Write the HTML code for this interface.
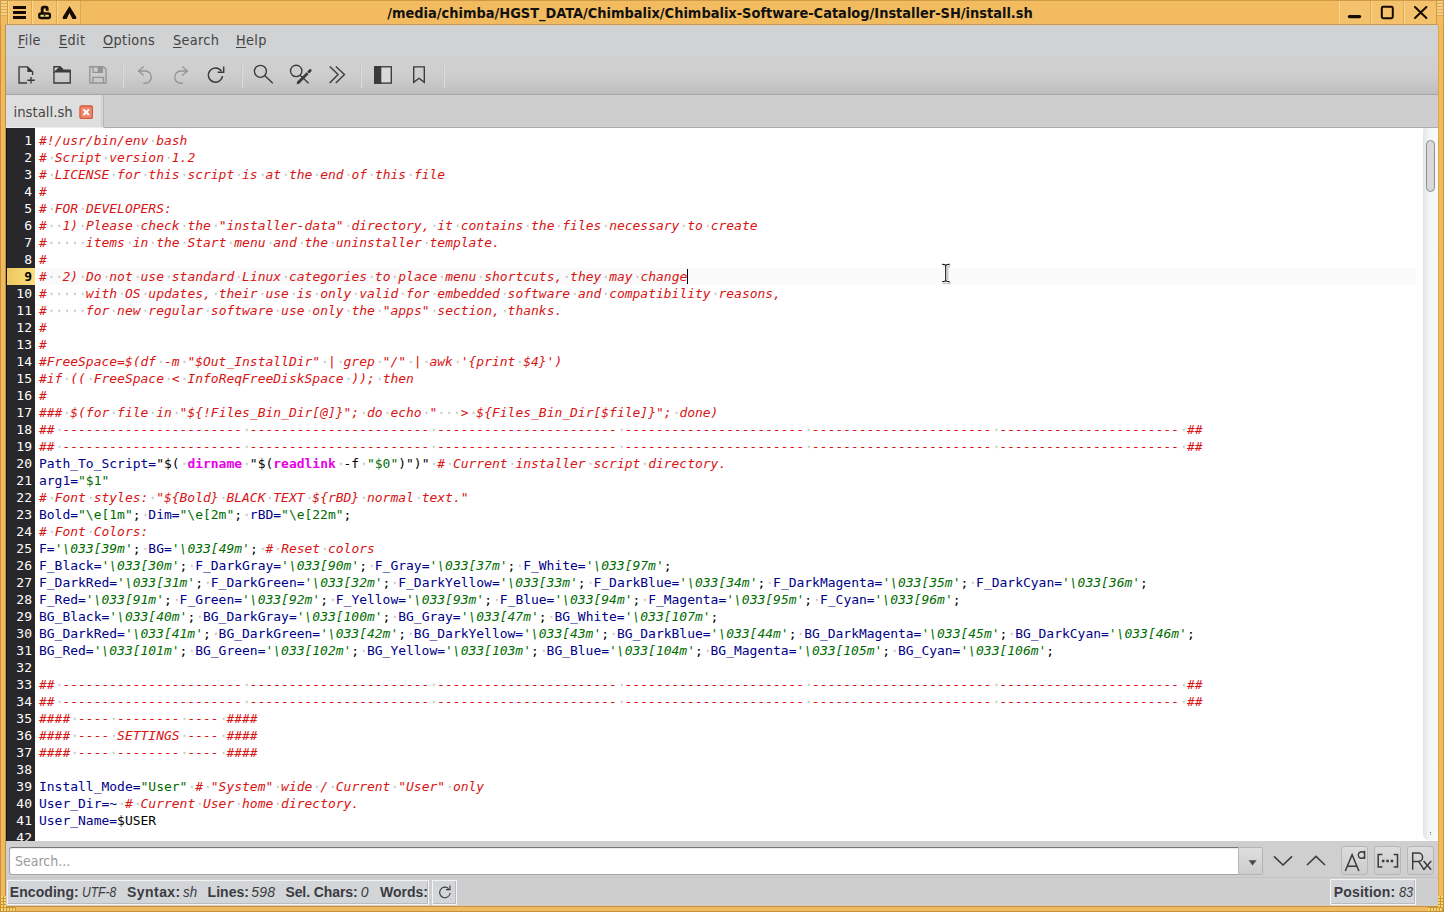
<!DOCTYPE html>
<html lang="en">
<head>
<meta charset="utf-8">
<title>install.sh - FeatherPad</title>
<style>
*{box-sizing:border-box;margin:0;padding:0}
html,body{width:1444px;height:912px;overflow:hidden;background:#f0b95e}
body{position:relative;font-family:"DejaVu Sans Condensed","Liberation Sans",sans-serif;color:#3a3a3a}
.abs{position:absolute}
/* window frame */
#frame{left:0;top:0;width:1444px;height:912px;background:#f1ba5f}
#frame .edge{background:#c4923a}
#title{left:0;top:0;width:1444px;height:25px;background:#f2bb5f}
#titletext{left:-12px;top:1px;width:1444px;text-align:center;height:25px;line-height:25px;font-weight:bold;font-size:14.45px;color:#111;white-space:nowrap}
.tbtn{top:1px;height:23px;background:#f4c16c;border-left:1px solid #f9d792;border-right:1px solid #dca855}
#client{left:6px;top:25px;width:1432px;height:881px;background:#d2d2d2}
/* menu */
#menubar{left:0;top:0;width:1432px;height:30px;background:#d1d2d3;border-top:1px solid #e0cfbd}
.mi{top:-1.5px;height:30px;line-height:30px;font-size:14.3px;letter-spacing:0.35px;color:#434343;white-space:nowrap}
.mi u{text-decoration:underline;text-underline-offset:2px}
/* toolbar */
#toolbar{left:0;top:30px;width:1432px;height:40px;background:linear-gradient(#d1d1d1 0%,#cecece 50%,#c0c0c0 95%,#bdbdbd 100%);border-bottom:1px solid #a6a6a6}
.sep{top:8px;width:2px;height:25px;border-left:1px solid #c6c6c6;border-right:1px solid #dbdbdb}
.ico{width:24px;height:24px;top:8px}
/* tabs */
#tabbar{left:0;top:70px;width:1432px;height:33px;background:#cecece;border-bottom:1px solid #ababab}
#tab{left:0;top:0;width:98px;height:33px;background:#dedede;border-right:1px solid #b9b9b9;border-bottom:1px solid #ececec;box-shadow:inset -2px 0 0 #d3d3d3}
#tabtext{left:7.5px;top:1px;height:32px;line-height:31px;font-size:14.75px;color:#464646}
/* editor */
#editor{left:0;top:103px;width:1417px;height:713px;background:#fff;overflow:hidden}
#gutter{left:0;top:0;width:29px;height:713px;background:#28282a;overflow:hidden;border-left:1px solid #151515}
#nums{left:-1px;top:4px;width:29px}
.n{height:17px;line-height:17px;font-family:"DejaVu Sans Mono","Liberation Mono",monospace;font-size:13px;color:#fff;text-align:right;padding-right:3px;white-space:nowrap}
.n.cur{background:linear-gradient(90deg,#edc65c,#fbe07e);color:#000;font-weight:bold}
#code{left:33px;top:4px;width:1385px}
.ln{height:17px;line-height:17px;font-family:"DejaVu Sans Mono","Liberation Mono",monospace;font-size:12.977px;white-space:pre;color:#000;position:relative}
.ln.cur{background:#fafafa;margin-left:-3px;padding-left:3px;width:1380px}
.c{color:#d81414;font-style:italic}
.v{color:#00008b}
.s{color:#006c00}
.q{color:#006c00;font-style:italic}
.k{color:#e800e8;font-weight:bold}
.p{color:#000}
i.w{font-style:inherit;background-image:radial-gradient(circle at 50% 50%,#b0b0b0 0,#b0b0b0 0.75px,rgba(176,176,176,0) 1.25px);background-size:1ch 17px;background-position:0.6px -0.6px;background-repeat:repeat-x}
.caret{display:inline-block;width:1px;height:15px;background:#000;vertical-align:-3px}
/* scrollbar */
#vscroll{left:1417px;top:103px;width:15px;height:713px;background:#fff}
#vtrack{left:0;top:0;width:15px;height:713px;border-radius:2px 2px 7px 7px;background:linear-gradient(90deg,#e2e4e4,#f4f5f5 40%,#fbfbfb)}
#thumb{left:3px;top:12px;width:9px;height:52px;border:1px solid #8e8e8e;border-radius:5px;background:#d9d9d9}
/* search */
#searchbar{left:0;top:816px;width:1432px;height:39px;background:#cfcfcf}
#sinput{left:3px;top:6px;width:1230px;height:28px;background:#fff;border:1px solid #a2a2a2;border-top-color:#767676;border-radius:3px 0 0 3px;box-shadow:inset 0 1px 1px rgba(0,0,0,.08);font-size:14px;line-height:26px;padding-left:5px;color:#9a9a9a}
#sdrop{left:1232px;top:6px;width:25px;height:28px;border:1px solid #b4b4b4;border-left:1px solid #b9b9b9;border-radius:0 2px 2px 0;background:linear-gradient(#dedede,#cdcdcd)}
.sbtn{top:5px;width:27px;height:29px;border:1px solid #b7b7b7;border-radius:3px;background:linear-gradient(#dcdcdc,#cccccc)}
/* status */
#status{left:0;top:855px;width:1432px;height:26px;background:#cecece;font-size:14px;font-family:"Liberation Sans",sans-serif}
.st{top:2px;height:21px;line-height:21px;white-space:nowrap;color:#3a3c42}
b.st{font-weight:bold}
i.st{font-style:italic}
.stframe{border:1px solid #f4f4f4;background:#d3d5d8;box-shadow:inset -1px -1px 0 rgba(150,158,160,.45)}
.stframe2{border:1px solid #f4f4f4;background:#d3d5d8}
.stbtn{border:1px solid #bdbdbd;border-radius:2px;background:linear-gradient(#dcdcdc,#cecece)}

.gripH{background:repeating-linear-gradient(180deg,#f6cf84 0,#f6cf84 2px,#dcaa52 2px,#dcaa52 3px)}
.gripD{background-color:#f8d274;background-image:repeating-linear-gradient(180deg,rgba(196,148,44,0) 0,rgba(196,148,44,0) 2px,#c8982f 2px,#c8982f 3px),repeating-linear-gradient(90deg,rgba(196,148,44,0) 0,rgba(196,148,44,0) 2px,#c8982f 2px,#c8982f 3px)}
</style>
</head>
<body>
<div id="frame" class="abs">
  <div class="abs edge" style="left:0;top:0;width:1444px;height:1px"></div>
  <div class="abs edge" style="left:0;top:0;width:1px;height:912px"></div>
  <div class="abs edge" style="left:1443px;top:0;width:1px;height:912px"></div>
  <div class="abs edge" style="left:0;top:911px;width:1444px;height:1px"></div>
  <div class="abs" style="left:5px;top:24px;width:1px;height:882px;background:#b98f4e"></div>
  <div class="abs" style="left:1438px;top:24px;width:1px;height:882px;background:#d9a653"></div>
  <div class="abs" style="left:5px;top:906px;width:1434px;height:1px;background:#bd9247"></div>

  <div class="abs gripD" style="left:1px;top:896px;width:5px;height:15px"></div>
  <div class="abs gripD" style="left:1px;top:907px;width:15px;height:4px;background-position:0 -2px"></div>
  <div class="abs gripD" style="left:1438px;top:896px;width:5px;height:15px"></div>
  <div class="abs gripD" style="left:1428px;top:907px;width:15px;height:4px;background-position:0 -2px"></div>
</div>
<div id="title" class="abs">
  <div class="abs edge" style="left:0;top:0;width:1444px;height:1px;background:#cf9a45"></div>
  <div id="titletext" class="abs">/media/chimba/HGST_DATA/Chimbalix/Chimbalix-Software-Catalog/Installer-SH/install.sh</div>
  <div class="abs tbtn" style="left:8px;width:24px"></div><div class="abs tbtn" style="left:32px;width:25px"></div><div class="abs tbtn" style="left:57px;width:24px"></div><div class="abs tbtn" style="left:1339px;width:32px"></div><div class="abs tbtn" style="left:1371px;width:33px"></div><div class="abs tbtn" style="left:1404px;width:33px"></div><svg class="abs" style="left:0;top:0" width="1444" height="25" viewBox="0 0 1444 25"><path d="M13 6H26V9H13ZM13 11H26V14H13ZM13 16H26V19H13Z" fill="#140a00"/><path d="M42.2 13.2V8.6Q42.2 7.2 43.6 7.2H45.8Q47.2 7.2 47.2 8.6V10.7" fill="none" stroke="#140a00" stroke-width="2.8"/><rect x="39.25" y="13.5" width="10.7" height="4.5" rx="1.7" fill="#efe07e" stroke="#140a00" stroke-width="2.3"/><ellipse cx="44.6" cy="15.7" rx="0.9" ry="0.8" fill="#140a00"/><path d="M69.5 5.9L76.4 17.2L76 18.9H72.5L69.5 12.9L66.5 18.9H63L62.6 17.2Z" fill="#140a00"/><path d="M1349.4 16.6H1359.6" stroke="#140a00" stroke-width="3.2" stroke-linecap="round" fill="none"/><rect x="1381.8" y="6.8" width="11" height="11.4" rx="1.4" fill="none" stroke="#140a00" stroke-width="2"/><path d="M1415 7L1426.4 18M1426.4 7L1415 18" stroke="#140a00" stroke-width="2" stroke-linecap="round" fill="none"/></svg>
  <div class="abs gripH" style="left:1px;top:1px;width:6px;height:15px"></div>
  <div class="abs" style="left:7px;top:1px;width:1px;height:23px;background:#cd9b44"></div>
  <div class="abs gripH" style="left:1437px;top:1px;width:6px;height:15px"></div>
  <div class="abs" style="left:1436px;top:1px;width:1px;height:23px;background:#cd9b44"></div>
  <div class="abs" style="left:0;top:0;width:1px;height:25px;background:#cf9a45"></div>
  <div class="abs" style="left:1443px;top:0;width:1px;height:25px;background:#cf9a45"></div>
  <div class="abs" style="left:6px;top:24px;width:1432px;height:1px;background:#c09a64"></div>
</div>
<div id="client" class="abs">
  <div id="menubar" class="abs">
    <div class="abs mi" style="left:12px"><u>F</u>ile</div>
    <div class="abs mi" style="left:53px"><u>E</u>dit</div>
    <div class="abs mi" style="left:97px"><u>O</u>ptions</div>
    <div class="abs mi" style="left:167px"><u>S</u>earch</div>
    <div class="abs mi" style="left:230px"><u>H</u>elp</div>
  </div>
  <div id="toolbar" class="abs">
    <svg class="abs ico" style="left:8px;top:8px" width="24" height="24" viewBox="0 0 24 24" fill="none" stroke="#3a3a3a" stroke-width="1.35" stroke-linecap="butt" stroke-linejoin="miter"><path d="M13.1 20H5.05V3.8H13.5L18.6 8.9V11.9"/><path d="M13.3 3.6L18.8 9.1H13.3Z" fill="#3a3a3a" stroke="none"/><path d="M17 13.9V20.6M13.4 17.2H20.8"/></svg>
<svg class="abs ico" style="left:44px;top:8px" width="24" height="24" viewBox="0 0 24 24" fill="none" stroke="#3a3a3a" stroke-width="1.35" stroke-linecap="butt" stroke-linejoin="miter"><path d="M3.95 9V19.95H20.25V9"/><path d="M3.95 9.6V3.75H9.7L13 6.6" /><path d="M9.7 3.1L13.3 6.5H20.9V9.6H3.3V9.4L9 4.2Z" fill="#3a3a3a" stroke="none"/></svg>
<svg class="abs ico" style="left:80px;top:8px" width="24" height="24" viewBox="0 0 24 24" fill="none" stroke="#949494" stroke-width="1.35" stroke-linecap="butt" stroke-linejoin="miter"><path d="M3.85 3.75H17.5L20.05 6.3V19.95H3.85Z"/><path d="M7 3.75V9.3H16.4V3.75"/><path d="M11.6 3.75H16.4V9.3H11.6Z" fill="#949494" stroke="none"/><path d="M6.9 19.95V14.4H17.5V19.95"/></svg>
<svg class="abs ico" style="left:127px;top:8px" width="24" height="24" viewBox="0 0 24 24" fill="none" stroke="#949494" stroke-width="1.35" stroke-linecap="butt" stroke-linejoin="miter"><path d="M10.7 3.5L5.6 8L10.7 12.6"/><path d="M5.6 8H12.2A6.1 6.1 0 0 1 12.2 20.2H10.4"/></svg>
<svg class="abs ico" style="left:163px;top:8px" width="24" height="24" viewBox="0 0 24 24" fill="none" stroke="#949494" stroke-width="1.35" stroke-linecap="butt" stroke-linejoin="miter"><path d="M13.3 3.5L18.4 8L13.3 12.6"/><path d="M18.4 8H11.8A6.1 6.1 0 0 0 11.8 20.2H13.6"/></svg>
<svg class="abs ico" style="left:198px;top:8px" width="24" height="24" viewBox="0 0 24 24" fill="none" stroke="#3a3a3a" stroke-width="1.45" stroke-linecap="butt" stroke-linejoin="miter"><path d="M18.5 13.2A7.1 7.1 0 1 1 17.4 8.1"/><path d="M19.7 3.5V9.2H13.6"/></svg>
<svg class="abs ico" style="left:245px;top:8px" width="24" height="24" viewBox="0 0 24 24" fill="none" stroke="#3a3a3a" stroke-width="1.35" stroke-linecap="butt" stroke-linejoin="miter"><circle cx="9.4" cy="8.3" r="6"/><path d="M13.6 12.6L21.8 20.3"/></svg>
<svg class="abs ico" style="left:282px;top:8px" width="24" height="24" viewBox="0 0 24 24" fill="none" stroke="#3a3a3a" stroke-width="1.35" stroke-linecap="butt" stroke-linejoin="miter"><circle cx="8.2" cy="7.9" r="5.7"/><path d="M12.4 12.4L20.6 20.2"/><path d="M9.6 20.2L19.6 10.2" stroke-width="2.8"/><path d="M8.3 21.5L10.6 17.2L12.6 19.2Z" fill="#3a3a3a" stroke="none"/><path d="M21 8.8L22.2 7.6" stroke-width="2.8" stroke-linecap="round"/></svg>
<svg class="abs ico" style="left:318.5px;top:8px" width="24" height="24" viewBox="0 0 24 24" fill="none" stroke="#3a3a3a" stroke-width="1.35" stroke-linecap="butt" stroke-linejoin="miter"><path d="M4.7 3.5L13.1 11.5L4.7 19.9M10.8 3.5L19.5 11.5L10.8 19.9"/></svg>
<svg class="abs ico" style="left:365px;top:8px" width="24" height="24" viewBox="0 0 24 24" fill="none" stroke="#3a3a3a" stroke-width="1.35" stroke-linecap="butt" stroke-linejoin="miter"><rect x="3.7" y="3.8" width="16.6" height="16.3" fill="#d9d9d9"/><rect x="3" y="3.1" width="7.3" height="17.7" fill="#3a3a3a" stroke="none"/></svg>
<svg class="abs ico" style="left:401px;top:8px" width="24" height="24" viewBox="0 0 24 24" fill="none" stroke="#3a3a3a" stroke-width="1.35" stroke-linecap="butt" stroke-linejoin="miter"><path d="M6.7 3.8H17.3V19.4L12 15.3L6.7 19.4Z"/></svg><div class="abs sep" style="left:116px"></div><div class="abs sep" style="left:235px"></div><div class="abs sep" style="left:354px"></div><div class="abs sep" style="left:437px"></div>
  </div>
  <div id="tabbar" class="abs">
    <div id="tab" class="abs">
      <div id="tabtext" class="abs">install.sh</div>
      <svg class="abs" style="left:72.5px;top:9.5px" width="14.4" height="14.4" viewBox="0 0 15 15"><rect x="1" y="1" width="13" height="13" rx="1.6" fill="#ee8767" stroke="#d85a3c" stroke-width="1.4"/><path d="M4.6 4.6L10.4 10.4M10.4 4.6L4.6 10.4" stroke="#fff" stroke-width="2"/></svg>
    </div>
  </div>
  <div id="editor" class="abs">
    <div id="code" class="abs">
<div class="ln"><span class="c">#!/usr/bin/env<i class="w"> </i>bash</span></div>
<div class="ln"><span class="c">#<i class="w"> </i>Script<i class="w"> </i>version<i class="w"> </i>1.2</span></div>
<div class="ln"><span class="c">#<i class="w"> </i>LICENSE<i class="w"> </i>for<i class="w"> </i>this<i class="w"> </i>script<i class="w"> </i>is<i class="w"> </i>at<i class="w"> </i>the<i class="w"> </i>end<i class="w"> </i>of<i class="w"> </i>this<i class="w"> </i>file</span></div>
<div class="ln"><span class="c">#</span></div>
<div class="ln"><span class="c">#<i class="w"> </i>FOR<i class="w"> </i>DEVELOPERS:</span></div>
<div class="ln"><span class="c">#<i class="w">  </i>1)<i class="w"> </i>Please<i class="w"> </i>check<i class="w"> </i>the<i class="w"> </i>"installer-data"<i class="w"> </i>directory,<i class="w"> </i>it<i class="w"> </i>contains<i class="w"> </i>the<i class="w"> </i>files<i class="w"> </i>necessary<i class="w"> </i>to<i class="w"> </i>create</span></div>
<div class="ln"><span class="c">#<i class="w">     </i>items<i class="w"> </i>in<i class="w"> </i>the<i class="w"> </i>Start<i class="w"> </i>menu<i class="w"> </i>and<i class="w"> </i>the<i class="w"> </i>uninstaller<i class="w"> </i>template.</span></div>
<div class="ln"><span class="c">#</span></div>
<div class="ln cur"><span class="c">#<i class="w">  </i>2)<i class="w"> </i>Do<i class="w"> </i>not<i class="w"> </i>use<i class="w"> </i>standard<i class="w"> </i>Linux<i class="w"> </i>categories<i class="w"> </i>to<i class="w"> </i>place<i class="w"> </i>menu<i class="w"> </i>shortcuts,<i class="w"> </i>they<i class="w"> </i>may<i class="w"> </i>change</span><span class="caret"></span></div>
<div class="ln"><span class="c">#<i class="w">     </i>with<i class="w"> </i>OS<i class="w"> </i>updates,<i class="w"> </i>their<i class="w"> </i>use<i class="w"> </i>is<i class="w"> </i>only<i class="w"> </i>valid<i class="w"> </i>for<i class="w"> </i>embedded<i class="w"> </i>software<i class="w"> </i>and<i class="w"> </i>compatibility<i class="w"> </i>reasons,</span></div>
<div class="ln"><span class="c">#<i class="w">     </i>for<i class="w"> </i>new<i class="w"> </i>regular<i class="w"> </i>software<i class="w"> </i>use<i class="w"> </i>only<i class="w"> </i>the<i class="w"> </i>"apps"<i class="w"> </i>section,<i class="w"> </i>thanks.</span></div>
<div class="ln"><span class="c">#</span></div>
<div class="ln"><span class="c">#</span></div>
<div class="ln"><span class="c">#FreeSpace=$(df<i class="w"> </i>-m<i class="w"> </i>"$Out_InstallDir"<i class="w"> </i>|<i class="w"> </i>grep<i class="w"> </i>"/"<i class="w"> </i>|<i class="w"> </i>awk<i class="w"> </i>'{print<i class="w"> </i>$4}')</span></div>
<div class="ln"><span class="c">#if<i class="w"> </i>((<i class="w"> </i>FreeSpace<i class="w"> </i>&lt;<i class="w"> </i>InfoReqFreeDiskSpace<i class="w"> </i>));<i class="w"> </i>then</span></div>
<div class="ln"><span class="c">#</span></div>
<div class="ln"><span class="c">###<i class="w"> </i>$(for<i class="w"> </i>file<i class="w"> </i>in<i class="w"> </i>"${!Files_Bin_Dir[@]}";<i class="w"> </i>do<i class="w"> </i>echo<i class="w"> </i>"<i class="w">   </i>&gt;<i class="w"> </i>${Files_Bin_Dir[$file]}";<i class="w"> </i>done)</span></div>
<div class="ln"><span class="c">##<i class="w"> </i>-----------------------<i class="w"> </i>-----------------------<i class="w"> </i>-----------------------<i class="w"> </i>-----------------------<i class="w"> </i>-----------------------<i class="w"> </i>-----------------------<i class="w"> </i>##</span></div>
<div class="ln"><span class="c">##<i class="w"> </i>-----------------------<i class="w"> </i>-----------------------<i class="w"> </i>-----------------------<i class="w"> </i>-----------------------<i class="w"> </i>-----------------------<i class="w"> </i>-----------------------<i class="w"> </i>##</span></div>
<div class="ln"><span class="v">Path_To_Script=</span><span class="p">"$(<i class="w"> </i></span><span class="k">dirname</span><span class="p"><i class="w"> </i>"$(</span><span class="k">readlink</span><span class="p"><i class="w"> </i>-f<i class="w"> </i></span><span class="s">"$0"</span><span class="p">)")"<i class="w"> </i></span><span class="c">#<i class="w"> </i>Current<i class="w"> </i>installer<i class="w"> </i>script<i class="w"> </i>directory.</span></div>
<div class="ln"><span class="v">arg1=</span><span class="s">"$1"</span></div>
<div class="ln"><span class="c">#<i class="w"> </i>Font<i class="w"> </i>styles:<i class="w"> </i>"${Bold}<i class="w"> </i>BLACK<i class="w"> </i>TEXT<i class="w"> </i>${rBD}<i class="w"> </i>normal<i class="w"> </i>text."</span></div>
<div class="ln"><span class="v">Bold=</span><span class="s">"\e[1m"</span><span class="p">;<i class="w"> </i></span><span class="v">Dim=</span><span class="s">"\e[2m"</span><span class="p">;<i class="w"> </i></span><span class="v">rBD=</span><span class="s">"\e[22m"</span><span class="p">;</span></div>
<div class="ln"><span class="c">#<i class="w"> </i>Font<i class="w"> </i>Colors:</span></div>
<div class="ln"><span class="v">F=</span><span class="q">'\033[39m'</span><span class="p">;<i class="w"> </i></span><span class="v">BG=</span><span class="q">'\033[49m'</span><span class="p">;<i class="w"> </i></span><span class="c">#<i class="w"> </i>Reset<i class="w"> </i>colors</span></div>
<div class="ln"><span class="v">F_Black=</span><span class="q">'\033[30m'</span><span class="p">;<i class="w"> </i></span><span class="v">F_DarkGray=</span><span class="q">'\033[90m'</span><span class="p">;<i class="w"> </i></span><span class="v">F_Gray=</span><span class="q">'\033[37m'</span><span class="p">;<i class="w"> </i></span><span class="v">F_White=</span><span class="q">'\033[97m'</span><span class="p">;</span></div>
<div class="ln"><span class="v">F_DarkRed=</span><span class="q">'\033[31m'</span><span class="p">;<i class="w"> </i></span><span class="v">F_DarkGreen=</span><span class="q">'\033[32m'</span><span class="p">;<i class="w"> </i></span><span class="v">F_DarkYellow=</span><span class="q">'\033[33m'</span><span class="p">;<i class="w"> </i></span><span class="v">F_DarkBlue=</span><span class="q">'\033[34m'</span><span class="p">;<i class="w"> </i></span><span class="v">F_DarkMagenta=</span><span class="q">'\033[35m'</span><span class="p">;<i class="w"> </i></span><span class="v">F_DarkCyan=</span><span class="q">'\033[36m'</span><span class="p">;</span></div>
<div class="ln"><span class="v">F_Red=</span><span class="q">'\033[91m'</span><span class="p">;<i class="w"> </i></span><span class="v">F_Green=</span><span class="q">'\033[92m'</span><span class="p">;<i class="w"> </i></span><span class="v">F_Yellow=</span><span class="q">'\033[93m'</span><span class="p">;<i class="w"> </i></span><span class="v">F_Blue=</span><span class="q">'\033[94m'</span><span class="p">;<i class="w"> </i></span><span class="v">F_Magenta=</span><span class="q">'\033[95m'</span><span class="p">;<i class="w"> </i></span><span class="v">F_Cyan=</span><span class="q">'\033[96m'</span><span class="p">;</span></div>
<div class="ln"><span class="v">BG_Black=</span><span class="q">'\033[40m'</span><span class="p">;<i class="w"> </i></span><span class="v">BG_DarkGray=</span><span class="q">'\033[100m'</span><span class="p">;<i class="w"> </i></span><span class="v">BG_Gray=</span><span class="q">'\033[47m'</span><span class="p">;<i class="w"> </i></span><span class="v">BG_White=</span><span class="q">'\033[107m'</span><span class="p">;</span></div>
<div class="ln"><span class="v">BG_DarkRed=</span><span class="q">'\033[41m'</span><span class="p">;<i class="w"> </i></span><span class="v">BG_DarkGreen=</span><span class="q">'\033[42m'</span><span class="p">;<i class="w"> </i></span><span class="v">BG_DarkYellow=</span><span class="q">'\033[43m'</span><span class="p">;<i class="w"> </i></span><span class="v">BG_DarkBlue=</span><span class="q">'\033[44m'</span><span class="p">;<i class="w"> </i></span><span class="v">BG_DarkMagenta=</span><span class="q">'\033[45m'</span><span class="p">;<i class="w"> </i></span><span class="v">BG_DarkCyan=</span><span class="q">'\033[46m'</span><span class="p">;</span></div>
<div class="ln"><span class="v">BG_Red=</span><span class="q">'\033[101m'</span><span class="p">;<i class="w"> </i></span><span class="v">BG_Green=</span><span class="q">'\033[102m'</span><span class="p">;<i class="w"> </i></span><span class="v">BG_Yellow=</span><span class="q">'\033[103m'</span><span class="p">;<i class="w"> </i></span><span class="v">BG_Blue=</span><span class="q">'\033[104m'</span><span class="p">;<i class="w"> </i></span><span class="v">BG_Magenta=</span><span class="q">'\033[105m'</span><span class="p">;<i class="w"> </i></span><span class="v">BG_Cyan=</span><span class="q">'\033[106m'</span><span class="p">;</span></div>
<div class="ln"></div>
<div class="ln"><span class="c">##<i class="w"> </i>-----------------------<i class="w"> </i>-----------------------<i class="w"> </i>-----------------------<i class="w"> </i>-----------------------<i class="w"> </i>-----------------------<i class="w"> </i>-----------------------<i class="w"> </i>##</span></div>
<div class="ln"><span class="c">##<i class="w"> </i>-----------------------<i class="w"> </i>-----------------------<i class="w"> </i>-----------------------<i class="w"> </i>-----------------------<i class="w"> </i>-----------------------<i class="w"> </i>-----------------------<i class="w"> </i>##</span></div>
<div class="ln"><span class="c">####<i class="w"> </i>----<i class="w"> </i>--------<i class="w"> </i>----<i class="w"> </i>####</span></div>
<div class="ln"><span class="c">####<i class="w"> </i>----<i class="w"> </i>SETTINGS<i class="w"> </i>----<i class="w"> </i>####</span></div>
<div class="ln"><span class="c">####<i class="w"> </i>----<i class="w"> </i>--------<i class="w"> </i>----<i class="w"> </i>####</span></div>
<div class="ln"></div>
<div class="ln"><span class="v">Install_Mode=</span><span class="s">"User"</span><span class="p"><i class="w"> </i></span><span class="c">#<i class="w"> </i>"System"<i class="w"> </i>wide<i class="w"> </i>/<i class="w"> </i>Current<i class="w"> </i>"User"<i class="w"> </i>only</span></div>
<div class="ln"><span class="v">User_Dir=~</span><span class="p"><i class="w"> </i></span><span class="c">#<i class="w"> </i>Current<i class="w"> </i>User<i class="w"> </i>home<i class="w"> </i>directory.</span></div>
<div class="ln"><span class="v">User_Name=</span><span class="p">$USER</span></div>
<div class="ln"></div>
    </div>
    <div id="gutter" class="abs"><div id="nums" class="abs">
<div class="n">1</div>
<div class="n">2</div>
<div class="n">3</div>
<div class="n">4</div>
<div class="n">5</div>
<div class="n">6</div>
<div class="n">7</div>
<div class="n">8</div>
<div class="n cur">9</div>
<div class="n">10</div>
<div class="n">11</div>
<div class="n">12</div>
<div class="n">13</div>
<div class="n">14</div>
<div class="n">15</div>
<div class="n">16</div>
<div class="n">17</div>
<div class="n">18</div>
<div class="n">19</div>
<div class="n">20</div>
<div class="n">21</div>
<div class="n">22</div>
<div class="n">23</div>
<div class="n">24</div>
<div class="n">25</div>
<div class="n">26</div>
<div class="n">27</div>
<div class="n">28</div>
<div class="n">29</div>
<div class="n">30</div>
<div class="n">31</div>
<div class="n">32</div>
<div class="n">33</div>
<div class="n">34</div>
<div class="n">35</div>
<div class="n">36</div>
<div class="n">37</div>
<div class="n">38</div>
<div class="n">39</div>
<div class="n">40</div>
<div class="n">41</div>
<div class="n">42</div>
    </div></div>
  </div>
  <div id="vscroll" class="abs"><div id="vtrack" class="abs"></div><div id="thumb" class="abs"></div><div class="abs" style="left:7px;top:704px;width:1px;height:1px;background:#666"></div><div class="abs" style="left:7px;top:706px;width:1px;height:1px;background:#999"></div></div>
  <div id="searchbar" class="abs">
    <div id="sinput" class="abs">Search...</div>
    <div id="sdrop" class="abs"></div>
    <svg class="abs" style="left:1241px;top:18px" width="12" height="8" viewBox="0 0 12 8"><path d="M1.6 1.2H9.6L5.6 6.4Z" fill="#4a4a4a"/></svg><svg class="abs" style="left:1265px;top:12px" width="24" height="16" viewBox="0 0 24 16" fill="none" stroke="#3a3a3a" stroke-width="1.5"><path d="M3 3.4L12 12L21 3.4"/></svg><svg class="abs" style="left:1298px;top:12px" width="24" height="16" viewBox="0 0 24 16" fill="none" stroke="#3a3a3a" stroke-width="1.5"><path d="M3 12L12 3.4L21 12"/></svg><div class="abs sbtn" style="left:1335px"><svg class="abs" style="left:0;top:0" width="26" height="27" viewBox="0 0 26 27" fill="none" stroke="#3a3a3a" stroke-width="1.5"><path d="M3.3 24L10.1 7.6L16.9 24M5.4 19.2H14.8"/><path d="M22.6 3.8V12M22.6 6.6A3.3 3.3 0 1 0 22.6 9.4" stroke-width="1.4"/></svg></div><div class="abs sbtn" style="left:1368px"><svg class="abs" style="left:0;top:0" width="26" height="27" viewBox="0 0 26 27" fill="none" stroke="#3a3a3a" stroke-width="1.5"><path d="M7.4 7.6H3.2V20H7.4M18.6 7.6H22.5V20H18.6"/><path d="M6.9 12.7H9.4V15.3H6.9ZM11.3 12.7H13.8V15.3H11.3ZM15.7 12.7H18.2V15.3H15.7Z" fill="#3a3a3a" stroke="none"/></svg></div><div class="abs sbtn" style="left:1401px"><svg class="abs" style="left:0;top:0" width="26" height="27" viewBox="0 0 26 27" fill="none" stroke="#3a3a3a" stroke-width="1.45"><path d="M4.7 22.8V6H10.4A4.2 4.2 0 0 1 10.4 14.4H4.7M10.6 14.4L16.2 22.8"/><path d="M15.6 14L23.2 22.8M23.2 14L15.6 22.8"/></svg></div>
    <div class="abs" style="left:0;top:36px;width:1432px;height:1px;background:#c2c2c2"></div>
  </div>
  <div id="status" class="abs">
    <div class="abs stframe" style="left:1px;top:0;width:422px;height:25px"></div><div class="abs stframe" style="left:426px;top:0;width:25px;height:25px"><svg class="abs" style="left:4px;top:3px" width="16" height="16" viewBox="0 0 16 16" fill="none" stroke="#3a3a3a" stroke-width="1.1"><path d="M13.2 9A5.3 5.3 0 1 1 11.6 4.6"/><path d="M13 1.6V5.6H9"/></svg></div><div class="abs stframe" style="left:1324px;top:-1px;width:86px;height:26px"></div><b class="abs st" style="left:3.8px;letter-spacing:0.06px">Encoding:</b><i class="abs st" style="left:75.7px;transform:scaleX(0.864);transform-origin:0 50%">UTF-8</i><b class="abs st" style="left:121.0px;letter-spacing:0.45px">Syntax:</b><i class="abs st" style="left:176.8px;transform:scaleX(0.950);transform-origin:0 50%">sh</i><b class="abs st" style="left:201.6px;letter-spacing:0.02px">Lines:</b><i class="abs st" style="left:245.2px;letter-spacing:0.25px">598</i><b class="abs st" style="left:279.4px;letter-spacing:-0.08px">Sel. Chars:</b><i class="abs st" style="left:354.7px;letter-spacing:0.00px">0</i><b class="abs st" style="left:374.0px;letter-spacing:-0.02px">Words:</b><b class="abs st" style="left:1327.8px;letter-spacing:0.18px">Position:</b><i class="abs st" style="left:1392.8px;transform:scaleX(0.913);transform-origin:0 50%">83</i>
    <div class="abs" style="left:0;top:25px;width:1432px;height:1px;background:#d9ccc0"></div>
  </div>
</div>
  <svg class="abs" style="left:936px;top:259px" width="20" height="30" viewBox="0 0 20 30">
    <path d="M6.2 5.6Q9.7 5.2 9.7 7V21Q9.7 22.8 6.2 22.6M13.4 5.6Q9.7 5.2 9.7 7M13.4 22.6Q9.7 22.8 9.7 21" fill="none" stroke="rgba(120,120,120,.45)" stroke-width="3.4" transform="translate(1 1)"/>
    <path d="M6.2 5.4Q9.7 5.2 9.7 7V21Q9.7 22.8 6.2 22.6M13.4 5.4Q9.7 5.2 9.7 7M13.4 22.6Q9.7 22.8 9.7 21" fill="none" stroke="#fff" stroke-width="3"/>
    <path d="M6.2 5.4Q9.7 5.2 9.7 7V21Q9.7 22.8 6.2 22.6M13.4 5.4Q9.7 5.2 9.7 7M13.4 22.6Q9.7 22.8 9.7 21" fill="none" stroke="#111" stroke-width="1.1"/>
  </svg>
</body>
</html>
